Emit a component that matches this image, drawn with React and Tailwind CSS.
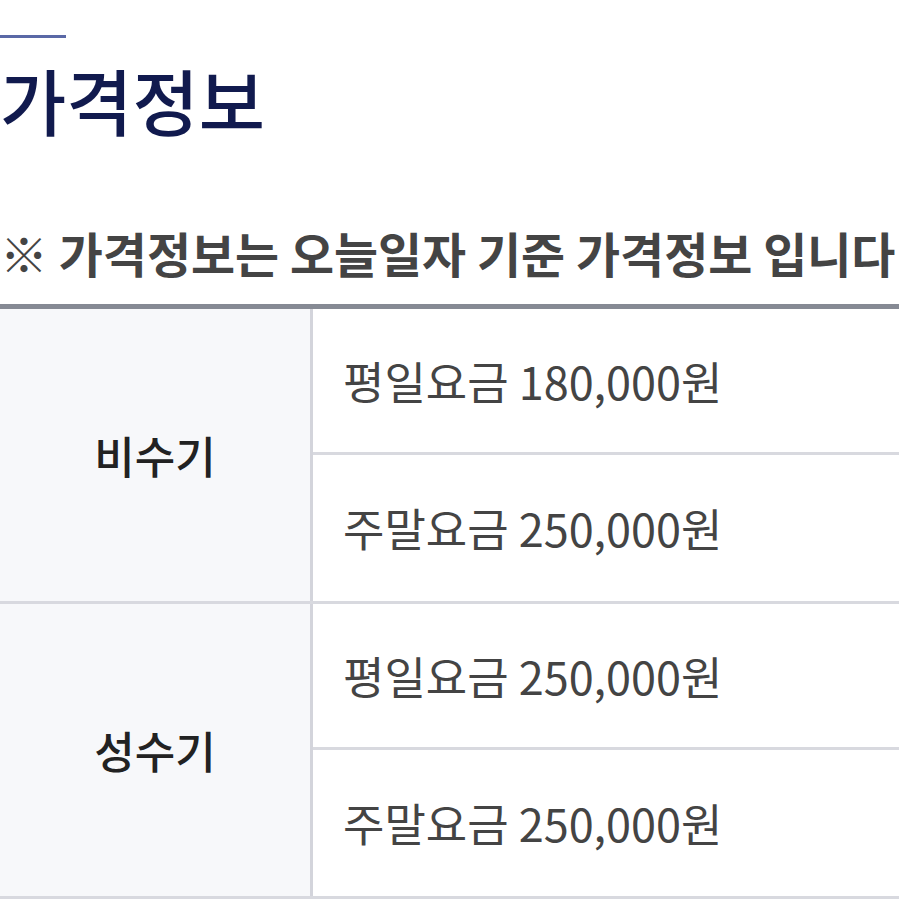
import React from "react";

const font = { fontFamily: '"Noto Sans CJK KR", "Noto Sans", sans-serif' };

const seasons = [
  { name: "비수기", prices: ["평일요금 180,000원", "주말요금 250,000원"] },
  { name: "성수기", prices: ["평일요금 250,000원", "주말요금 250,000원"] },
];

export default function App() {
  return (
    <div className="w-[899px] h-[913px] bg-white overflow-hidden" style={font}>
      <div className="pt-[35px]">
        <div className="w-[66px] h-[3px] bg-[#5a68a6]" />
        <h1 className="mt-[25px] text-[72px] leading-[72px] font-medium text-[#111a4e]">
          가격정보
        </h1>
      </div>

      <p className="mt-[93px] whitespace-nowrap text-[47.9px] leading-[48px] font-bold text-[#444]">
        ※ 가격정보는 오늘일자 기준 가격정보 입니다
      </p>

      <div className="mt-[28px] border-t-[5px] border-[#868a94]">
        {seasons.map((s) => (
          <div key={s.name} className="flex border-b-[3px] border-[#d8d9df]">
            <div className="w-[313px] shrink-0 bg-[#f7f8fa] border-r-[3px] border-[#d3d4db] flex items-center justify-center">
              <span className="text-[44px] font-medium text-[#222]">{s.name}</span>
            </div>
            <div className="flex-1">
              {s.prices.map((p, i) => (
                <div
                  key={i}
                  className={
                    "h-[146px] flex items-center pl-[30px] " +
                    (i === 0 ? "border-b-[3px] border-[#d8d9df]" : "")
                  }
                >
                  <span className="text-[45px] text-[#444]">{p}</span>
                </div>
              ))}
            </div>
          </div>
        ))}
      </div>
    </div>
  );
}
